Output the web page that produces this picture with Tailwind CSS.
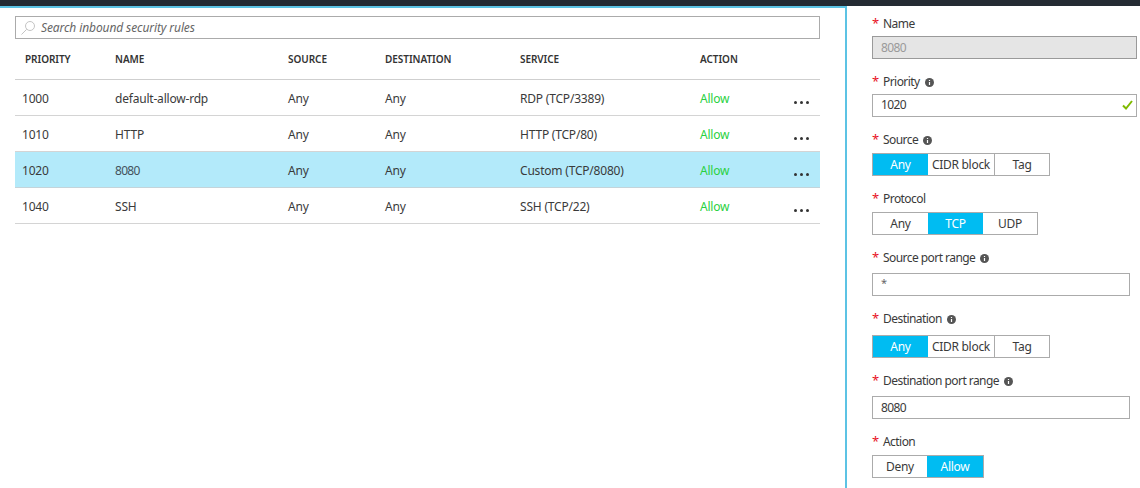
<!DOCTYPE html>
<html>
<head>
<meta charset="utf-8">
<script src="https://cdn.jsdelivr.net/npm/@tailwindcss/browser@4"></script>
</head>
<body class="m-0 bg-white">
<div class="flex flex-col w-[1140px] h-[488px] overflow-hidden bg-white text-[12px] tracking-[-0.2px] text-[#3a3a3a] font-['Noto_Sans','Open_Sans',sans-serif]">
  <div class="h-[6px] bg-[#252b33] shrink-0"></div>
  <div class="flex flex-1 min-h-0">
    <main class="w-[847px] shrink-0 border-r-2 border-t-2 border-[#5cc3e4] pl-[15px] pr-[25px] pt-[8px] flex flex-col">
      <div class="h-[23px] border border-[#ababab] flex items-center pl-[4px] gap-[5px] shrink-0">
        <svg width="16" height="16" viewBox="0 0 16 16" fill="none" stroke="#c4c4c4" stroke-width="1"><circle cx="10" cy="6" r="4.5"/><path d="M6.7 9.3 1.5 14.5"/></svg>
        <span class="italic text-[#666] text-[12px] tracking-[-0.1px]">Search inbound security rules</span>
      </div>
      <div class="grid grid-cols-[100px_173px_97px_135px_180px_94px_1fr] h-[41px] items-center border-b border-[#cfcfcf] text-[10px] font-semibold text-[#333] tracking-[-0.05px] shrink-0">
        <span class="pl-[10px]">PRIORITY</span><span>NAME</span><span>SOURCE</span><span>DESTINATION</span><span>SERVICE</span><span>ACTION</span><span></span>
      </div>
      <div class="grid grid-cols-[100px_173px_97px_135px_180px_94px_1fr] h-[36px] pt-[2px] items-center border-b border-[#d4d4d4] shrink-0">
        <span class="pl-[7px]">1000</span><span>default-allow-rdp</span><span>Any</span><span>Any</span><span>RDP (TCP/3389)</span><span class="text-[#2ad13f]">Allow</span>
        <span class="flex gap-[3px] mt-[8px]"><i class="w-[3px] h-[3px] rounded-full bg-[#333]"></i><i class="w-[3px] h-[3px] rounded-full bg-[#333]"></i><i class="w-[3px] h-[3px] rounded-full bg-[#333]"></i></span>
      </div>
      <div class="grid grid-cols-[100px_173px_97px_135px_180px_94px_1fr] h-[36px] pt-[2px] items-center border-b border-[#d4d4d4] shrink-0">
        <span class="pl-[7px]">1010</span><span>HTTP</span><span>Any</span><span>Any</span><span>HTTP (TCP/80)</span><span class="text-[#2ad13f]">Allow</span>
        <span class="flex gap-[3px] mt-[8px]"><i class="w-[3px] h-[3px] rounded-full bg-[#333]"></i><i class="w-[3px] h-[3px] rounded-full bg-[#333]"></i><i class="w-[3px] h-[3px] rounded-full bg-[#333]"></i></span>
      </div>
      <div class="grid grid-cols-[100px_173px_97px_135px_180px_94px_1fr] h-[36px] pt-[2px] items-center border-b border-[#c4d4da] bg-[#b3eafa] shrink-0">
        <span class="pl-[7px]">1020</span><span class="tracking-[-0.7px] text-[#44525c]">8080</span><span>Any</span><span>Any</span><span>Custom (TCP/8080)</span><span class="text-[#2ad13f]">Allow</span>
        <span class="flex gap-[3px] mt-[8px]"><i class="w-[3px] h-[3px] rounded-full bg-[#333]"></i><i class="w-[3px] h-[3px] rounded-full bg-[#333]"></i><i class="w-[3px] h-[3px] rounded-full bg-[#333]"></i></span>
      </div>
      <div class="grid grid-cols-[100px_173px_97px_135px_180px_94px_1fr] h-[36px] pt-[2px] items-center border-b border-[#d4d4d4] shrink-0">
        <span class="pl-[7px]">1040</span><span>SSH</span><span>Any</span><span>Any</span><span>SSH (TCP/22)</span><span class="text-[#2ad13f]">Allow</span>
        <span class="flex gap-[3px] mt-[8px]"><i class="w-[3px] h-[3px] rounded-full bg-[#333]"></i><i class="w-[3px] h-[3px] rounded-full bg-[#333]"></i><i class="w-[3px] h-[3px] rounded-full bg-[#333]"></i></span>
      </div>
    </main>
    <aside class="flex-1 pl-[25px] flex flex-col items-start">
      <div class="h-[20px] mt-[8px] flex items-center gap-[5px]"><span class="text-[#e81123] w-[6px] text-[13px]">*</span><span class="tracking-[-0.55px]">Name</span></div>
      <div class="mt-[2px] w-[265px] h-[23px] border border-[#9a9a9a] bg-[#e5e5e5] text-[#9a9a9a] pl-[8px] flex items-center tracking-[-0.6px]">8080</div>

      <div class="h-[20px] mt-[13px] flex items-center gap-[5px]"><span class="text-[#e81123] w-[6px] text-[13px]">*</span><span class="tracking-[-0.55px]">Priority</span><svg width="9" height="9" viewBox="0 0 9 9"><circle cx="4.5" cy="4.5" r="4.5" fill="#555"/><path d="M4.5 2v1M4.5 4v3" stroke="#fff" stroke-width="1.2"/></svg></div>
      <div class="mt-[2px] w-[265px] h-[23px] border border-[#ababab] pl-[8px] pr-[3px] pb-[2px] flex items-center justify-between tracking-[-0.6px]">1020<svg width="11" height="10" viewBox="0 0 11 10" fill="none" stroke="#7fba00" stroke-width="2"><path d="M1 5.5 4 8.5 10 1"/></svg></div>

      <div class="h-[20px] mt-[13px] flex items-center gap-[5px]"><span class="text-[#e81123] w-[6px] text-[13px]">*</span><span class="tracking-[-0.55px]">Source</span><svg width="9" height="9" viewBox="0 0 9 9"><circle cx="4.5" cy="4.5" r="4.5" fill="#555"/><path d="M4.5 2v1M4.5 4v3" stroke="#fff" stroke-width="1.2"/></svg></div>
      <div class="mt-[3px] flex h-[23px] border border-[#ababab] tracking-[-0.3px]">
        <span class="w-[55px] bg-[#00bcf2] text-white flex items-center justify-center">Any</span>
        <span class="w-[67px] border-r border-[#ababab] flex items-center justify-center">CIDR block</span>
        <span class="w-[54px] flex items-center justify-center">Tag</span>
      </div>

      <div class="h-[20px] mt-[13px] flex items-center gap-[5px]"><span class="text-[#e81123] w-[6px] text-[13px]">*</span><span class="tracking-[-0.55px]">Protocol</span></div>
      <div class="mt-[3px] flex h-[23px] border border-[#ababab] tracking-[-0.3px]">
        <span class="w-[55px] flex items-center justify-center">Any</span>
        <span class="w-[55px] bg-[#00bcf2] text-white flex items-center justify-center">TCP</span>
        <span class="w-[54px] flex items-center justify-center">UDP</span>
      </div>

      <div class="h-[20px] mt-[13px] flex items-center gap-[5px]"><span class="text-[#e81123] w-[6px] text-[13px]">*</span><span class="tracking-[-0.55px]">Source port range</span><svg width="9" height="9" viewBox="0 0 9 9"><circle cx="4.5" cy="4.5" r="4.5" fill="#555"/><path d="M4.5 2v1M4.5 4v3" stroke="#fff" stroke-width="1.2"/></svg></div>
      <div class="mt-[5px] w-[258px] h-[23px] border border-[#ababab] pl-[8px] pb-[2px] flex items-center text-[#666] text-[11px]">*</div>

      <div class="h-[20px] mt-[13px] flex items-center gap-[5px]"><span class="text-[#e81123] w-[6px] text-[13px]">*</span><span class="tracking-[-0.55px]">Destination</span><svg width="9" height="9" viewBox="0 0 9 9"><circle cx="4.5" cy="4.5" r="4.5" fill="#555"/><path d="M4.5 2v1M4.5 4v3" stroke="#fff" stroke-width="1.2"/></svg></div>
      <div class="mt-[6px] flex h-[23px] border border-[#ababab] tracking-[-0.3px]">
        <span class="w-[55px] bg-[#00bcf2] text-white flex items-center justify-center">Any</span>
        <span class="w-[67px] border-r border-[#ababab] flex items-center justify-center">CIDR block</span>
        <span class="w-[54px] flex items-center justify-center">Tag</span>
      </div>

      <div class="h-[20px] mt-[13px] flex items-center gap-[5px]"><span class="text-[#e81123] w-[6px] text-[13px]">*</span><span class="tracking-[-0.55px]">Destination port range</span><svg width="9" height="9" viewBox="0 0 9 9"><circle cx="4.5" cy="4.5" r="4.5" fill="#555"/><path d="M4.5 2v1M4.5 4v3" stroke="#fff" stroke-width="1.2"/></svg></div>
      <div class="mt-[5px] w-[258px] h-[23px] border border-[#ababab] pl-[8px] flex items-center tracking-[-0.6px]">8080</div>

      <div class="h-[20px] mt-[13px] flex items-center gap-[5px]"><span class="text-[#e81123] w-[6px] text-[13px]">*</span><span class="tracking-[-0.55px]">Action</span></div>
      <div class="mt-[3px] flex h-[23px] border border-[#ababab] tracking-[-0.3px]">
        <span class="w-[54px] flex items-center justify-center">Deny</span>
        <span class="w-[56px] bg-[#00bcf2] text-white flex items-center justify-center">Allow</span>
      </div>
    </aside>
  </div>
</div>
</body>
</html>
